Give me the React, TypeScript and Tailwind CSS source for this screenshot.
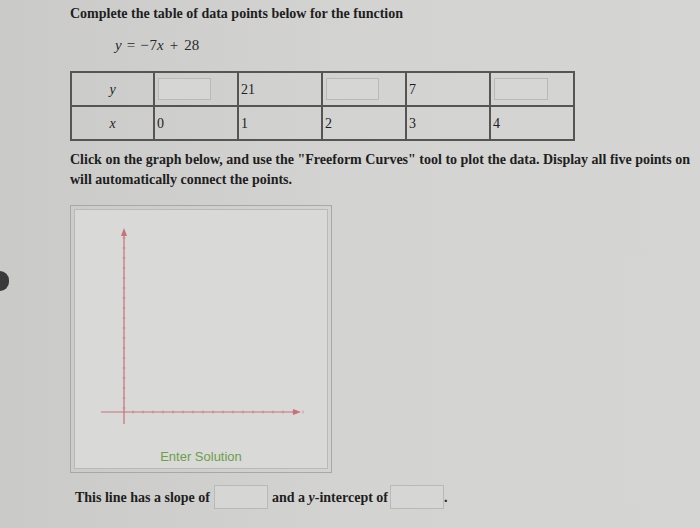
import React from 'react';

const serif = { fontFamily: '"Liberation Serif", "Times New Roman", serif' };

function Blank({ className = '' }: { className?: string }) {
    return <span className={`inline-block border border-[#b9bab7] bg-[#d6d7d4] ${className}`} />;
}

function Graph() {
    const yTicks = Array.from({ length: 18 }, (_, i) => 28 + i * 10);
    const xTicks = Array.from({ length: 18 }, (_, i) => 58 + i * 10);
    return (
        <svg width="251" height="226" viewBox="0 0 251 226" className="block">
            <g stroke="#c9707a" strokeWidth="1.2" fill="none">
                <line x1="49" y1="22" x2="49" y2="214" />
                <line x1="26" y1="202" x2="222" y2="202" />
                {yTicks.map((y) => (
                    <line key={y} x1="47.5" y1={y} x2="50.5" y2={y} strokeWidth="0.6" />
                ))}
                {xTicks.map((x) => (
                    <line key={x} x1={x} y1="200.5" x2={x} y2="203.5" strokeWidth="0.6" />
                ))}
            </g>
            <path d="M49 18 L46 26 L52 26 Z" fill="#c9707a" />
            <path d="M226 202 L218 199 L218 205 Z" fill="#c9707a" />
        </svg>
    );
}

export default function App() {
    return (
        <main
            className="relative w-[700px] h-[528px] overflow-hidden bg-gradient-to-r from-[#cacbc8] via-[#d3d3d1] to-[#d5d5d3] text-[#1e1e1e]"
            style={serif}
        >
            <div className="absolute left-[-9px] top-[271px] w-[18px] h-[20px] rounded-full bg-[#3a3a3a]" />

            <div className="pl-[70px] pt-[5px]">
                <p className="text-[14px] font-bold leading-[18px] whitespace-nowrap">
                    Complete the table of data points below for the function
                </p>
                <p className="mt-[13px] ml-[45px] text-[15px] leading-[18px] text-[#2a2a2a] whitespace-nowrap">
                    <i>y</i>
                    <span className="mx-[5px]">=</span>
                    <span className="mr-[1px]">−</span>
                    <span>7<i>x</i></span>
                    <span className="mx-[6px]">+</span>
                    <span>28</span>
                </p>

                <table className="mt-[17px] w-[505px] border-collapse border-2 border-[#555] text-[14px]">
                    <tbody>
                        <tr className="h-[34px]">
                            <td className="w-[83px] border-2 border-[#555] text-center italic">y</td>
                            <td className="w-[84px] border-2 border-[#555] px-[3px]"><Blank className="w-[53px] h-[22px] align-middle" /></td>
                            <td className="w-[84px] border-2 border-[#555] pl-[2px] align-middle">21</td>
                            <td className="w-[84px] border-2 border-[#555] px-[3px]"><Blank className="w-[53px] h-[22px] align-middle" /></td>
                            <td className="w-[84px] border-2 border-[#555] pl-[2px]">7</td>
                            <td className="border-2 border-[#555] px-[3px]"><Blank className="w-[54px] h-[22px] align-middle" /></td>
                        </tr>
                        <tr className="h-[34px]">
                            <td className="border-2 border-[#555] text-center italic">x</td>
                            <td className="border-2 border-[#555] pl-[2px]">0</td>
                            <td className="border-2 border-[#555] pl-[2px]">1</td>
                            <td className="border-2 border-[#555] pl-[2px]">2</td>
                            <td className="border-2 border-[#555] pl-[2px]">3</td>
                            <td className="border-2 border-[#555] pl-[2px]">4</td>
                        </tr>
                    </tbody>
                </table>

                <p className="mt-[9px] text-[14px] font-bold leading-[20px] whitespace-nowrap">
                    Click on the graph below, and use the "Freeform Curves" tool to plot the data. Display all five points on
                    <br />
                    will automatically connect the points.
                </p>

                <div className="mt-[15px] w-[262px] border border-[#a8a9a6] p-[3px]">
                    <div className="border border-[#b9bab7] bg-[#d9d9d7] pb-[2px]">
                        <Graph />
                        <p className="mt-[12px] text-center text-[13px] leading-[18px] text-[#6d9f4c]" style={{ fontFamily: '"Liberation Sans", Arial, sans-serif' }}>
                            Enter Solution
                        </p>
                    </div>
                </div>

                <div className="mt-[12px] ml-[5px] flex items-center text-[14px] font-bold">
                    <span>This line has a slope of</span>
                    <Blank className="ml-[4px] w-[54px] h-[24px]" />
                    <span className="ml-[4px]">and a <i>y</i>-intercept of</span>
                    <Blank className="ml-[2px] w-[54px] h-[24px]" />
                    <span>.</span>
                </div>
            </div>
        </main>
    );
}
